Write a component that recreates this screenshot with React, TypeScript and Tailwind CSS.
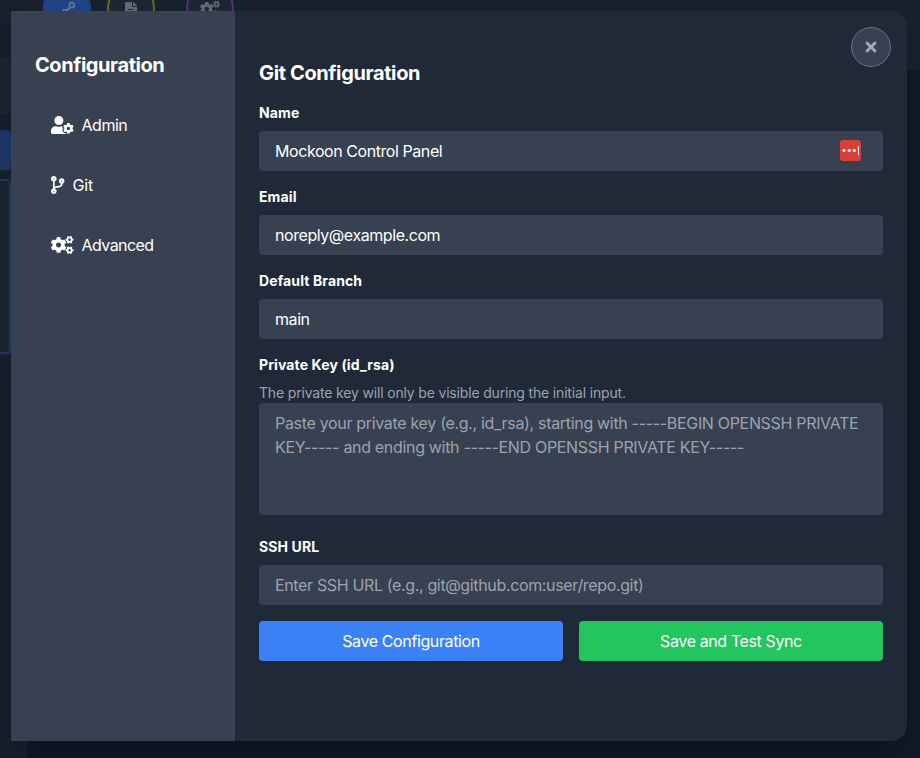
import React from "react";
import { FaUserCog, FaCodeBranch, FaCogs, FaTimes, FaFileAlt } from "react-icons/fa";

const inputClass =
  "block h-10 w-full rounded bg-[#384151] px-4 text-base tracking-[-0.027em] text-white outline-none placeholder:tracking-[-0.022em] placeholder:text-[#9ca3af]";

function Label({ children }: { children: React.ReactNode }) {
  return <label className="mb-2 block text-sm font-bold tracking-[0.008em] text-white">{children}</label>;
}

function Backdrop() {
  return (
    <div className="absolute inset-0 bg-[#111826]">
      <div className="absolute left-0 top-0 h-[70px] w-[920px] bg-[#17202d]" />
      <div className="absolute left-0 top-0 h-[758px] w-[27px] bg-[#161f2b]" />
      <div className="absolute -left-4 top-[58px] h-14 w-[27px] rounded bg-[#1c2331]" />
      <div className="absolute -left-4 top-[130px] h-10 w-[27px] rounded bg-[#1d3664]" />
      <div className="absolute -left-4 top-[179px] h-[175px] w-[27px] rounded border-2 border-[#1d3664] bg-[#1c2431]" />
      <div className="absolute -top-4 left-[43px] h-12 w-12 rounded-full bg-[#1f4384]" />
      <div className="absolute -top-4 left-[107px] h-12 w-12 rounded-full border-2 border-[#75602b] bg-[#1c2534]" />
      <div className="absolute -top-4 left-[186px] h-12 w-12 rounded-full border-2 border-[#572d80] bg-[#1c2534]" />
      <svg className="absolute left-[58px] top-0" width="20" height="18" viewBox="0 0 20 18" fill="none" stroke="#62728f" strokeWidth="2">
        <circle cx="13.8" cy="5.2" r="2.4" />
        <path d="M12.2 7.3L9.5 10H4.5M9.5 10L8 14" />
      </svg>
      <FaFileAlt className="absolute left-[125px] top-[2px] h-4 w-3 text-[#626973]" />
      <FaCogs className="absolute left-[200px] top-[1px] h-4 w-5 text-[#626973]" />
    </div>
  );
}

export default function App() {
  return (
    <div
      className="relative h-[758px] w-[920px] overflow-hidden p-[11px] text-white antialiased"
      style={{ fontFamily: 'Inter, "Liberation Sans", sans-serif' }}
    >
      <Backdrop />
      <div className="relative flex h-[730px] w-[896px] overflow-hidden rounded-r-[16px] bg-[#202937] shadow-xl">
        <aside className="w-56 shrink-0 bg-[#384151] px-6 pt-10">
          <h2 className="text-xl font-bold tracking-[-0.022em]">Configuration</h2>
          <nav className="mt-5 flex flex-col gap-2">
            <button className="flex h-[52px] items-center gap-2 pl-4 text-left">
              <FaUserCog className="h-[18px] w-[22.5px]" />
              <span className="tracking-[-0.03em]">Admin</span>
            </button>
            <button className="flex h-[52px] items-center gap-2 pl-4 text-left">
              <FaCodeBranch className="h-[18px] w-[13.5px]" />
              <span className="tracking-[-0.01em]">Git</span>
            </button>
            <button className="flex h-[52px] items-center gap-2 pl-4 text-left">
              <FaCogs className="h-[18px] w-[22.5px]" />
              <span className="tracking-[-0.035em]">Advanced</span>
            </button>
          </nav>
        </aside>
        <main className="flex-1 px-6 pt-12">
          <h2 className="mb-4 text-xl font-bold tracking-[-0.019em]">Git Configuration</h2>
          <div className="mb-4">
            <Label>Name</Label>
            <div className="relative">
              <input className={inputClass} defaultValue="Mockoon Control Panel" />
              <svg className="absolute right-[22px] top-[9px]" width="21" height="21" viewBox="0 0 21 21">
                <rect width="21" height="21" rx="3" fill="#d93f38" />
                <circle cx="4" cy="10.5" r="1.6" fill="white" />
                <circle cx="9.2" cy="10.5" r="1.6" fill="white" />
                <circle cx="14.3" cy="10.5" r="1.6" fill="white" />
                <path d="M18.4 6.3v8.8" stroke="white" strokeWidth="1" />
              </svg>
            </div>
          </div>
          <div className="mb-4">
            <Label>Email</Label>
            <input className={inputClass} defaultValue="noreply@example.com" />
          </div>
          <div className="mb-4">
            <Label>Default Branch</Label>
            <input className={inputClass} defaultValue="main" />
          </div>
          <div className="mb-[22px]">
            <Label>Private Key (id_rsa)</Label>
            <p className="text-sm tracking-[-0.012em] text-[#9ca3af]">
              The private key will only be visible during the initial input.
            </p>
            <textarea
              className="block h-28 w-full resize-none rounded bg-[#384151] px-4 py-2 text-base tracking-[-0.02em] outline-none placeholder:text-[#9ca3af]"
              placeholder="Paste your private key (e.g., id_rsa), starting with -----BEGIN OPENSSH PRIVATE KEY----- and ending with -----END OPENSSH PRIVATE KEY-----"
            />
          </div>
          <div className="mb-4">
            <Label>SSH URL</Label>
            <input className={inputClass} placeholder="Enter SSH URL (e.g., git@github.com:user/repo.git)" />
          </div>
          <div className="flex gap-4">
            <button className="h-10 flex-1 rounded bg-[#3c82f6] tracking-[-0.024em]">Save Configuration</button>
            <button className="h-10 flex-1 rounded bg-[#22c55e] tracking-[-0.024em]">Save and Test Sync</button>
          </div>
        </main>
        <button className="absolute right-4 top-4 flex h-10 w-10 items-center justify-center rounded-full border border-[#6b7280] bg-[#384151] text-[#a3a9b4]">
          <FaTimes className="h-4 w-4" />
        </button>
      </div>
    </div>
  );
}
